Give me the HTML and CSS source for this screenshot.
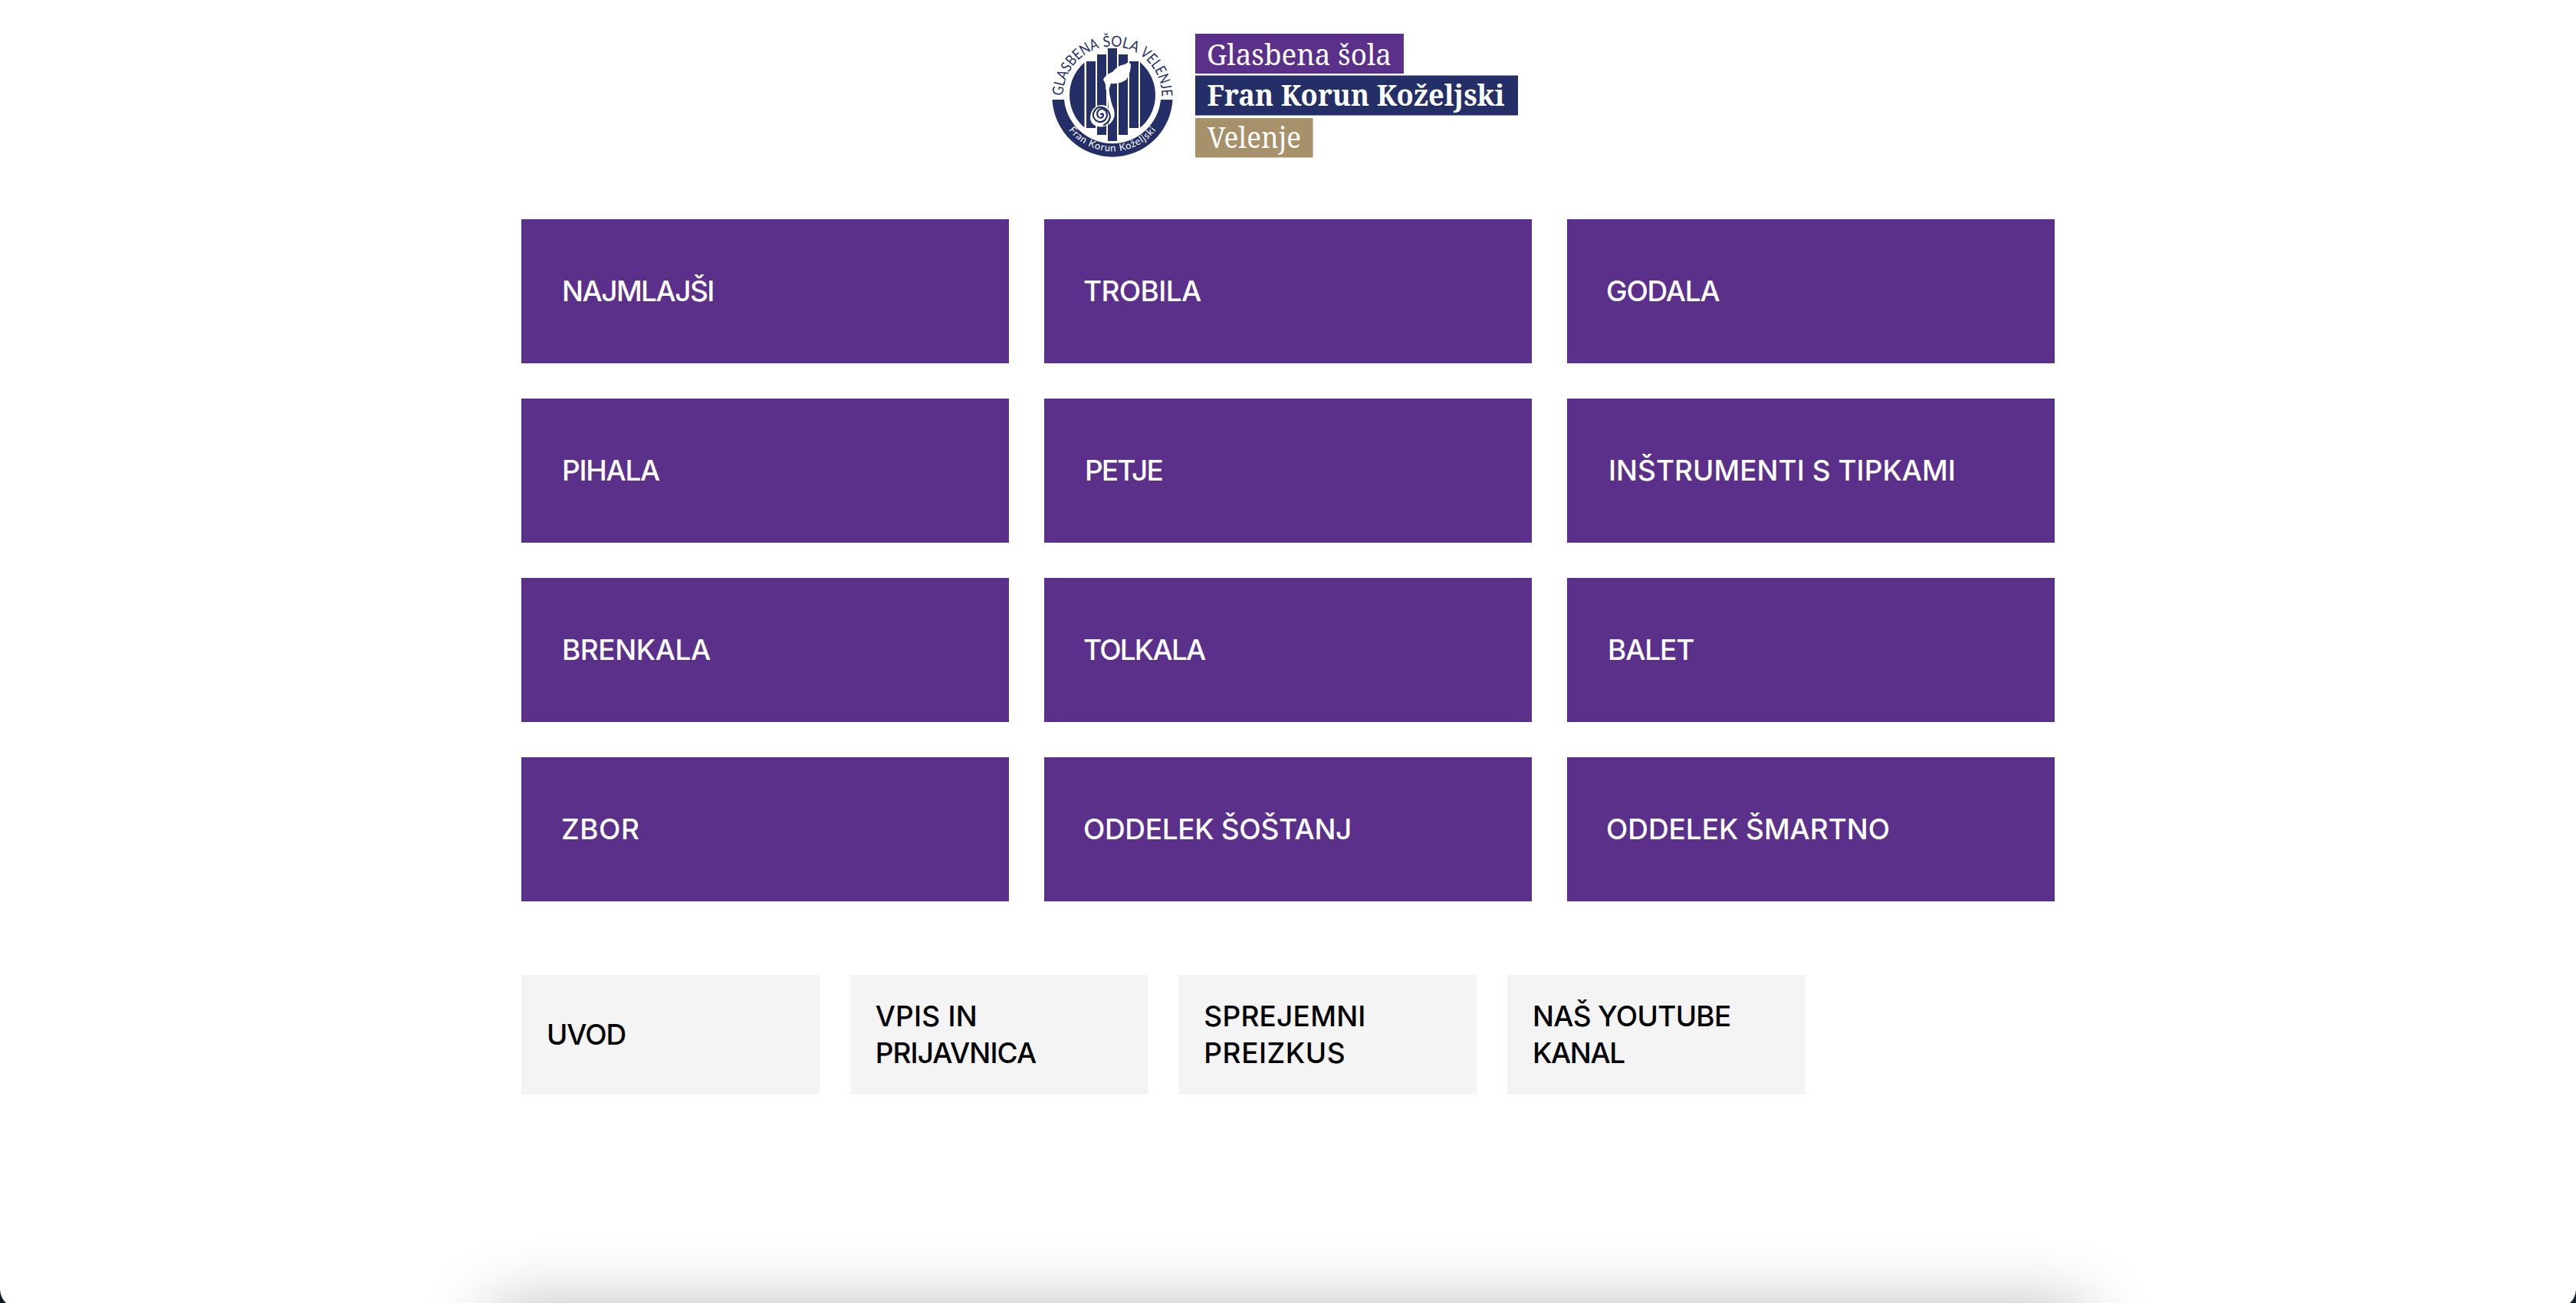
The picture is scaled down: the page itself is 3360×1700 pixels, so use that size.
FILE: index.html
```html
<!DOCTYPE html>
<html lang="sl">
<head>
<meta charset="utf-8">
<title>Glasbena šola Velenje</title>
<link rel="stylesheet" href="styles.css">
</head>
<body>
<div class="page">
<header class="header">
  <a class="brand" href="#">
    <svg class="emblem" viewBox="0 0 180 190" width="180" height="190" role="img" aria-label="Glasbena šola Velenje">
      <defs>
        <path id="arc-top" d="M26.500 96A64.500 65.500 0 0 1 155.500 96"/>
        <path id="arc-bottom" d="M18.500 95A72.500 72.500 0 0 0 163.500 95"/>
        <clipPath id="disc"><circle cx="91" cy="94" r="56"/></clipPath>
      </defs>
      <path fill="#232f66" d="M12.500 100H28A63.300 63.300 0 0 0 154 100H169.500A78.600 78.600 0 0 1 12.500 100Z"/>
      <g fill="#232f66">
        <path clip-path="url(#disc)" d="M35 52H54.500V136H35Z"/>
        <path clip-path="url(#disc)" d="M127 50H148V136H127Z"/>
        <path d="M57 50H69V137H57ZM71 41H83V146H71ZM85 33H97V154H85ZM99 41H111V146H99ZM113 50H125V137H113Z"/>
      </g>
      <path fill="#fff" d="M79 74Q82 67 91 64Q98 55 107 54Q113 49 115 54Q115 65 109 74Q101 80 89 79Q86 86 87 91Q89 104 93 113Q96 127 85 133Q76 138 67 133Q59 127 64 115Q69 106 79 107Q84 108 86 112Q85 94 82 85Q83 80 79 74Z"/>
      <path fill="none" stroke="#232f66" stroke-width="2.200" stroke-linecap="round" d="M76 119Q79 117 79 121Q77 126 72 122Q69 115 76 112Q84 112 84 121Q82 130 73 129Q65 126 66 118Q70 108 78 110Q87 113 88 122Q87 130 80 133"/>
      <text class="ring-title"><textPath href="#arc-top" startOffset="1" textLength="84" lengthAdjust="spacingAndGlyphs">GLASBENA</textPath></text>
      <text class="ring-title"><textPath href="#arc-top" startOffset="90" textLength="45" lengthAdjust="spacingAndGlyphs">ŠOLA</textPath></text>
      <text class="ring-title"><textPath href="#arc-top" startOffset="139" textLength="65" lengthAdjust="spacingAndGlyphs">VELENJE</textPath></text>
      <text class="ring-name"><textPath href="#arc-bottom" startOffset="48" textLength="131">Fran Korun Koželjski</textPath></text>
    </svg>
    <svg class="wordmark" viewBox="0 0 422 164" width="422" height="164">
      <path fill="#5b308a" d="M0 0H272V52H0Z"/>
      <path fill="#232f66" d="M0 54.500H421V106.500H0Z"/>
      <path fill="#a7916a" d="M0 110H153.500V161.500H0Z"/>
      <text class="word" x="15" y="40.500" textLength="241" lengthAdjust="spacingAndGlyphs">Glasbena šola</text>
      <text class="word word-bold" x="15.500" y="94" textLength="388" lengthAdjust="spacingAndGlyphs">Fran Korun Koželjski</text>
      <text class="word" x="16" y="148.500" textLength="122" lengthAdjust="spacingAndGlyphs">Velenje</text>
    </svg>
  </a>
</header>
<main class="content">
  <nav class="tiles">
    <a class="tile najmlajsi" href="#">NAJMLAJŠI</a>
    <a class="tile trobila" href="#">TROBILA</a>
    <a class="tile godala" href="#">GODALA</a>
    <a class="tile pihala" href="#">PIHALA</a>
    <a class="tile petje" href="#">PETJE</a>
    <a class="tile tipke" href="#">INŠTRUMENTI S TIPKAMI</a>
    <a class="tile brenkala" href="#">BRENKALA</a>
    <a class="tile tolkala" href="#">TOLKALA</a>
    <a class="tile balet" href="#">BALET</a>
    <a class="tile zbor" href="#">ZBOR</a>
    <a class="tile sostanj" href="#">ODDELEK ŠOŠTANJ</a>
    <a class="tile smartno" href="#">ODDELEK ŠMARTNO</a>
  </nav>
  <nav class="links">
    <a class="link" href="#"><span class="uvod">UVOD</span></a>
    <a class="link" href="#"><span class="vpis">VPIS IN</span><span class="prijavnica">PRIJAVNICA</span></a>
    <a class="link" href="#"><span class="sprejemni">SPREJEMNI</span><span class="preizkus">PREIZKUS</span></a>
    <a class="link" href="#"><span class="youtube">NAŠ YOUTUBE</span><span class="kanal">KANAL</span></a>
  </nav>
</main>
<div class="sheet-shadow"></div>
<svg class="corner corner-left" viewBox="0 0 8 17" width="8" height="17"><path fill="#04182c" d="M0 0Q1 11 8 17H0Z"/></svg>
<svg class="corner corner-right" viewBox="0 0 8 17" width="8" height="17"><path fill="#14202c" d="M8 0Q7 11 0 17H8Z"/></svg>
</div>
</body>
</html>
```
FILE: styles.css
```css
* { box-sizing: border-box; }
body {
  margin: 0;
  background: #fff;
  font: 500 37px/48px Inter, "Liberation Sans", sans-serif;
}
.page { position: relative; height: 1700px; overflow: hidden; }
a { color: inherit; text-decoration: none; }
.header { display: flex; padding: 30px 0 0 1360px; }
.brand { display: flex; align-items: flex-start; gap: 19px; }
.emblem, .wordmark { display: block; flex: none; }
.wordmark { margin-top: 14px; }
.ring-title { font: 400 19.500px Lato, sans-serif; fill: #232f66; }
.ring-name { font: 400 13px Lato, sans-serif; fill: #fff; }
.word { font: 400 38px "Noto Serif", "Liberation Serif", serif; fill: #fff; }
.word-bold { font-weight: 700; }
.content { width: 2000px; margin: 66px auto 0; }

.tiles { display: grid; grid-template-columns: repeat(3, 636px); grid-auto-rows: 188px; gap: 46px; }
.tile { display: flex; align-items: center; padding: 0 53px; background: #5b308a; color: #fff; white-space: nowrap; }
.links { display: grid; grid-template-columns: repeat(4, 388.660px); grid-auto-rows: 156px; gap: 40px; margin-top: 96px; }
.link { display: flex; flex-direction: column; justify-content: center; padding: 0 33px; background: #f4f4f4; color: #000; white-space: nowrap; }

.najmlajsi { letter-spacing: -1.540px; }
.pihala { letter-spacing: -1.300px; }
.brenkala { letter-spacing: -0.450px; }
.zbor { letter-spacing: 0.540px; padding-left: 52px; }
.trobila { letter-spacing: -0.630px; padding-left: 51px; }
.petje { letter-spacing: -1.910px; }
.tolkala { letter-spacing: -1.820px; padding-left: 51px; }
.sostanj { letter-spacing: -0.350px; padding-left: 51px; }
.godala { letter-spacing: -1.220px; padding-left: 51px; }
.tipke { padding-left: 54px; }
.balet { letter-spacing: -1.140px; }
.smartno { letter-spacing: -0.070px; padding-left: 51px; }
.uvod { letter-spacing: -1.060px; }
.vpis { letter-spacing: 0.180px; }
.prijavnica { letter-spacing: -0.910px; }
.sprejemni { letter-spacing: 0.220px; }
.preizkus { letter-spacing: 0.550px; }
.youtube { letter-spacing: -0.680px; }
.kanal { letter-spacing: -1.400px; }

.sheet-shadow { position: absolute; left: 640px; right: 640px; top: 1708px; height: 200px; box-shadow: 0 0 90px rgba(0, 0, 0, 0.300); }
.corner { position: absolute; bottom: 0; }
.corner-left { left: 0; }
.corner-right { right: 0; }
```
